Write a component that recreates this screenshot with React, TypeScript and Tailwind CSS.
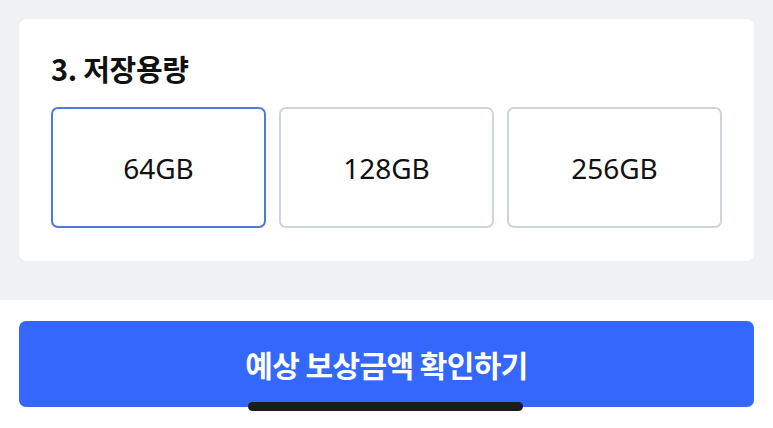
import { useState } from "react";

const options = ["64GB", "128GB", "256GB"];

export default function App() {
  const [selected, setSelected] = useState("64GB");

  return (
    <div className="relative w-[773px] h-[428px] overflow-hidden bg-white" style={{ fontFamily: '"Noto Sans", "Noto Sans CJK KR", sans-serif' }}>
      <div className="bg-[#eff2f5] px-[19px] pt-[19px] pb-[39px]">
        <div className="bg-white rounded-[8px] px-[32px] pt-[29px] pb-[33px]">
          <h2 className="text-[29px] leading-[40px] font-bold text-[#111] tracking-[-0.3px]" style={{ fontFamily: '"Noto Sans CJK KR", sans-serif' }}>
            3. 저장용량
          </h2>
          <div className="mt-[19px] grid grid-cols-3 gap-[13px]">
            {options.map((opt) => (
              <button
                key={opt}
                onClick={() => setSelected(opt)}
                className={`h-[121px] rounded-[7px] bg-white flex items-center justify-center text-[28px] text-[#111] ${
                  selected === opt ? "border-2 border-[#4f7ad8]" : "border-2 border-[#ced4db]"
                }`}
              >
                {opt}
              </button>
            ))}
          </div>
        </div>
      </div>
      <div className="px-[19px] pt-[21px]">
        <button className="w-full h-[86px] rounded-[7px] bg-[#3468fc] text-white text-[30px] font-semibold tracking-[-0.6px] flex items-center justify-center" style={{ fontFamily: '"Noto Sans CJK KR", sans-serif' }}>
          예상 보상금액 확인하기
        </button>
      </div>
      {/* home indicator sits over the button */}
      <div className="absolute left-[248px] top-[402px] w-[275px] h-[9px] rounded-full bg-[#1c1c1c]" />
    </div>
  );
}
